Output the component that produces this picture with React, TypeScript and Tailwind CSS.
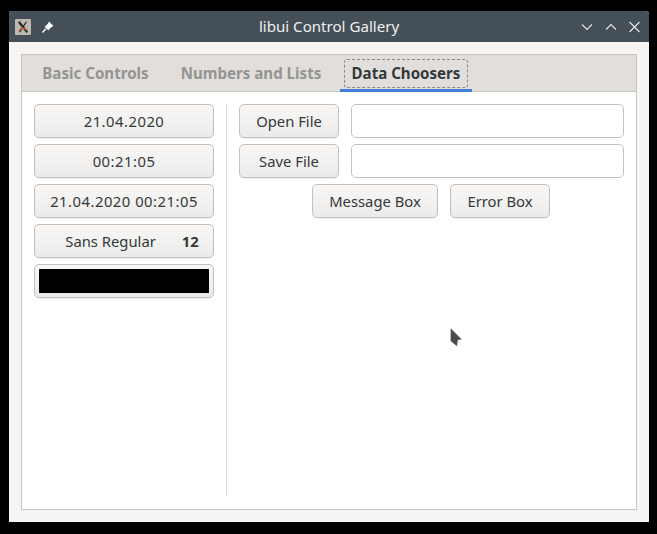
const font = { fontFamily: '"Noto Sans", sans-serif' }

const btn =
  'h-[34px] flex items-center justify-center rounded-[5px] border border-[#c5c0ba] bg-gradient-to-b from-[#f8f7f6] to-[#ecebe9] text-[14.8px] text-[#33393b] shadow-[0_1px_0_rgba(0,0,0,0.06)]'

function AppIcon() {
  return (
    <svg width="16" height="16" viewBox="0 0 17 17" aria-hidden="true">
      <rect width="17" height="17" rx="1" fill="#bdb8b2" />
      <path d="M4 3 L13 14" stroke="#2a2a2a" strokeWidth="2.4" />
      <path d="M12 3 L5 14" stroke="#2a2a2a" strokeWidth="1.2" />
      <path d="M4 13 Q7 7 13 12" stroke="#c8643c" strokeWidth="1.5" fill="none" />
    </svg>
  )
}

function PinIcon() {
  return (
    <svg width="12" height="12" viewBox="0 0 12 12" aria-hidden="true">
      <path d="M7 0.5 L11.5 5 L9.5 6 L7 8.5 L6.5 9.5 L2.5 5.5 L3.5 5 L6 2.5 Z" fill="#fff" />
      <path d="M4 7.5 L0.5 11.5" stroke="#fff" strokeWidth="1.3" />
    </svg>
  )
}

function WindowButtons() {
  return (
    <div className="flex items-center gap-[12px] text-[#e6e9ea]">
      <svg width="12" height="12" viewBox="0 0 12 12" fill="none" stroke="currentColor" strokeWidth="1.1" aria-hidden="true">
        <path d="M1 3.5 L6 8.5 L11 3.5" />
      </svg>
      <svg width="12" height="12" viewBox="0 0 12 12" fill="none" stroke="currentColor" strokeWidth="1.1" aria-hidden="true">
        <path d="M1 8.5 L6 3.5 L11 8.5" />
      </svg>
      <svg width="11" height="12" viewBox="0 0 11 12" fill="none" stroke="currentColor" strokeWidth="1.1" aria-hidden="true">
        <path d="M0.5 1 L10.5 11 M10.5 1 L0.5 11" />
      </svg>
    </div>
  )
}

export default function App() {
  return (
    <div className="relative h-[534px] w-[657px] overflow-hidden bg-black pl-[9px] pr-[8px] pt-[11px] pb-[12px]" style={font}>
      <div className="flex h-full flex-col rounded-t-[3px] bg-[#f6f5f4]">
        <div className="relative flex h-[31px] shrink-0 items-center justify-between rounded-t-[3px] bg-[#454f58] pl-[6px] pr-[9px]">
          <div className="flex items-center gap-[11px]">
            <AppIcon />
            <PinIcon />
          </div>
          <span className="absolute left-0 right-0 pb-[1px] text-center text-[15.1px] text-[#eef0f1]">libui Control Gallery</span>
          <WindowButtons />
        </div>

        <div className="flex min-h-0 flex-1 flex-col pl-[12px] pr-[12px] pt-[12px] pb-[12px]">
          <div className="flex min-h-0 flex-1 flex-col border border-[#c9c5c0] bg-white">
            <div className="flex h-[37px] shrink-0 gap-[8px] border-b border-[#c9c5c0] bg-[#e1dedb] pl-[8px] text-[15.1px] font-bold">
              <div className="flex w-[131px] items-center justify-center text-[#949492]">Basic Controls</div>
              <div className="flex w-[164px] items-center justify-center text-[#949492]">Numbers and Lists</div>
              <div className="ml-[-1px] h-[37px] w-[132px] border-b-[3px] border-[#4182d8] px-[4px] pt-[4px] text-[#33393b]">
                <div className="flex h-[29px] items-center justify-center rounded-[3px] border border-dashed border-[#8a8a88]">Data Choosers</div>
              </div>
            </div>

            <div className="flex min-h-0 flex-1 pl-[12px] pr-[12px] pt-[12px] pb-[12px]">
              <div className="flex w-[180px] shrink-0 flex-col gap-[6px]">
                <div className={btn + ' tracking-[0.5px]'}>21.04.2020</div>
                <div className={btn + ' tracking-[0.5px]'}>00:21:05</div>
                <div className={btn + ' tracking-[0.5px]'}>21.04.2020 00:21:05</div>
                <div className={btn + ' gap-[26px] pl-[16px]'}>
                  <span>Sans Regular</span>
                  <span className="font-bold">12</span>
                </div>
                <div className={btn + ' px-[4px]'}>
                  <div className="h-[24px] w-full bg-black" />
                </div>
              </div>

              <div className="ml-[12px] w-px shrink-0 bg-[#dedcd9]" />

              <div className="ml-[12px] flex min-w-0 flex-1 flex-col gap-[6px]">
                <div className="flex gap-[12px]">
                  <div className={btn + ' w-[100px] shrink-0'}>Open File</div>
                  <div className="h-[34px] flex-1 rounded-[5px] border border-[#c5c0ba] bg-white" />
                </div>
                <div className="flex gap-[12px]">
                  <div className={btn + ' w-[100px] shrink-0'}>Save File</div>
                  <div className="h-[34px] flex-1 rounded-[5px] border border-[#c5c0ba] bg-white" />
                </div>
                <div className="flex justify-center gap-[12px] pr-[1px]">
                  <div className={btn + ' w-[126px]'}>Message Box</div>
                  <div className={btn + ' w-[100px]'}>Error Box</div>
                </div>
              </div>
            </div>
          </div>
        </div>
      </div>

      <svg className="absolute left-[449px] top-[327px]" width="16" height="22" viewBox="0 0 16 22" aria-hidden="true">
        <path d="M1.5 1 L13 12.5 L9 13 L8 19.5 L1.5 14 Z" fill="#4b4b4b" stroke="#fff" strokeOpacity="0.6" strokeWidth="0.5" />
      </svg>
    </div>
  )
}
